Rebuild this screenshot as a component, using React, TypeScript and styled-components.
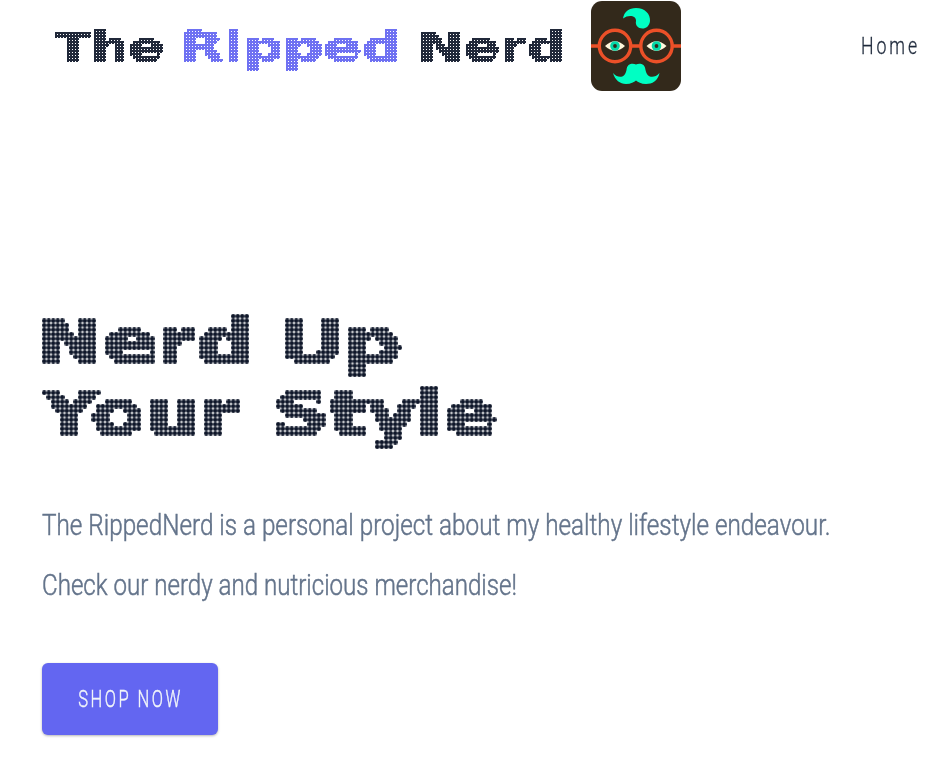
import React from "react";
import styled, { createGlobalStyle } from "styled-components";

const GlobalStyle = createGlobalStyle`
  *, *::before, *::after { box-sizing: border-box; }
  body { margin: 0; background: #fff; font-family: Roboto, "Liberation Sans", sans-serif; overflow: hidden; }
  h1, p { margin: 0; }
`;

const Page = styled.div`
  height: 767px;
  overflow: hidden;
  background: #fff;
`;

const Header = styled.header`
  display: flex;
  align-items: center;
  height: 92px;
  padding: 0 28px 0 55px;
`;

const Brand = styled.div`
  display: flex;
  width: 512px;
  height: 60px;
  margin: 2px 24px 0 0;
  font: 700 40px/61px "DejaVu Sans", sans-serif;
  color: #0f172a;
  -webkit-text-stroke: 1.1px currentColor;
  filter: url(#dots-small);
  mask-image: linear-gradient(90deg, #000 2px, transparent 2px), linear-gradient(#000 2px, transparent 2px);
  mask-size: 3px 3px;
  opacity: 0.92;
`;

const Word = styled.span<{ $width: number; $scale: number; $accent?: boolean }>`
  flex: none;
  width: ${(p) => p.$width}px;
  white-space: nowrap;
  transform: scaleX(${(p) => p.$scale});
  transform-origin: 0 50%;
  color: ${(p) => (p.$accent ? "#6366f1" : "#0f172a")};
`;

const Logo = styled.svg`
  flex: none;
  width: 90px;
  height: 90px;
  border-radius: 11px;
`;

const Nav = styled.nav`
  margin-left: auto;
`;

const NavLink = styled.a`
  display: block;
  width: 59px;
  font-size: 23px;
  font-weight: 300;
  letter-spacing: 3.8px;
  color: #1e293b;
  -webkit-text-stroke: 0.3px currentColor;
  white-space: nowrap;
  transform: scaleX(0.77);
  transform-origin: 0 50%;
`;

const Hero = styled.main`
  padding: 213px 42px 0;
`;

const Title = styled.h1`
  width: 468px;
  height: 153px;
  padding-top: 1px;
  font: 700 60px/72px "DejaVu Sans", sans-serif;
  color: #0f172a;
  -webkit-text-stroke: 2.4px currentColor;
  filter: url(#dots-large);
  mask-image: radial-gradient(circle at 50% 50%, #000 1.7px, transparent 2.8px);
  mask-size: 4.5px 4.5px;
`;

const TitleLine = styled.span<{ $indent: number }>`
  display: flex;
  height: 72px;
  margin-left: ${(p) => p.$indent}px;
`;

const Lead = styled.p`
  margin-top: 37px;
  font-size: 29px;
  font-weight: 300;
  line-height: 60px;
  color: #64748b;
  -webkit-text-stroke: 0.5px currentColor;
`;

const LeadLine = styled.span<{ $scale: number }>`
  display: block;
  width: max-content;
  transform: scaleX(${(p) => p.$scale});
  transform-origin: 0 50%;
`;

const ShopButton = styled.button`
  display: flex;
  align-items: center;
  justify-content: center;
  width: 176px;
  height: 72px;
  margin-top: 48px;
  padding: 2px 0 0;
  border: 0;
  border-radius: 6px;
  background: #6366f1;
  box-shadow: 0 1px 3px rgba(0, 0, 0, 0.2), 0 1px 2px rgba(0, 0, 0, 0.1);
  color: #f1f5f9;
  font: 300 23px/32px Roboto, sans-serif;
  letter-spacing: 3.4px;
  -webkit-text-stroke: 0.4px currentColor;
`;

const ButtonLabel = styled.span`
  white-space: nowrap;
  transform: scaleX(0.72);
`;

const FilterDefs = styled.svg`
  display: block;
  width: 0;
  height: 0;
`;

function DotFilter({ id, tile, points, radius }: { id: string; tile: number; points: number[]; radius: number }) {
  const cells = points.flatMap((y) => points.map((x) => ({ x, y, key: `p${x}-${y}` })));
  return (
    <filter id={id} x="0" y="0" width="1" height="1" colorInterpolationFilters="sRGB">
      {cells.map((c) => (
        <feFlood key={c.key} x={c.x} y={c.y} width="1" height="1" floodColor="#000" result={c.key} />
      ))}
      <feMerge x="0" y="0" width={tile} height={tile} result="cell">
        {cells.map((c) => (
          <feMergeNode key={c.key} in={c.key} />
        ))}
      </feMerge>
      <feTile in="cell" result="grid" />
      <feComponentTransfer in="SourceGraphic" result="solid">
        <feFuncA type="discrete" tableValues="0 1" />
      </feComponentTransfer>
      <feComposite in="solid" in2="grid" operator="in" />
      <feMorphology operator="dilate" radius={radius} />
    </filter>
  );
}

function Eye({ cx }: { cx: number }) {
  return (
    <g>
      <circle cx={cx} cy="45" r="15.7" fill="none" stroke="#ec5028" strokeWidth="3.4" />
      <path d={`M${cx - 10} 45Q${cx} 35.5 ${cx + 10} 45Q${cx} 54.5 ${cx - 10} 45Z`} fill="#fff8dc" />
      <circle cx={cx} cy="45" r="4.8" fill="#05d8a8" />
      <circle cx={cx} cy="45" r="1.9" fill="#33291b" />
    </g>
  );
}

export default function App() {
  return (
    <Page>
      <GlobalStyle />
      <Header>
        <Brand>
          <Word $width={126} $scale={1.32}>The</Word>
          <Word $width={237} $scale={1.4} $accent>Ripped</Word>
          <Word $width={147} $scale={1.35}>Nerd</Word>
        </Brand>
        <Logo viewBox="0 0 90 90" aria-label="The Ripped Nerd">
          <rect width="90" height="90" fill="#33291b" />
          <path d="M32 17.500C33 11 38 7 45 7C54 7 59.500 13 59 20C58.500 25 55 27.500 51.500 27.500C47 27.500 44 24 45 20C45.500 15 38 13 32 17.500Z" fill="#00ffc3" />
          <path d="M0 45H8M39.500 45H49.500M81 45H90" stroke="#ec5028" strokeWidth="3.6" />
          <Eye cx={24} />
          <Eye cx={65.5} />
          <path d="M45 63.500C48 62 54 62 54.500 69C56 77 63 78 68.500 72C67 80 61 83 55 83C50 83 47 81 45 79.500C43 81 40 83 35 83C29 83 24 79 22 72C27.500 78 34 77 35.500 69C36 62 42 62 45 63.500Z" fill="#00ffc3" />
        </Logo>
        <Nav>
          <NavLink>Home</NavLink>
        </Nav>
      </Header>
      <Hero>
        <Title>
          <TitleLine $indent={-5}>
            <Word $width={241} $scale={1.32}>Nerd</Word>
            <Word $width={120} $scale={1.35}>Up</Word>
          </TitleLine>
          <TitleLine $indent={0}>
            <Word $width={231} $scale={1.3}>Your</Word>
            <Word $width={230} $scale={1.3}>Style</Word>
          </TitleLine>
        </Title>
        <Lead>
          <LeadLine $scale={0.837}>The RippedNerd is a personal project about my healthy lifestyle endeavour.</LeadLine>
          <LeadLine $scale={0.831}>Check our nerdy and nutricious merchandise!</LeadLine>
        </Lead>
        <ShopButton>
          <ButtonLabel>SHOP NOW</ButtonLabel>
        </ShopButton>
      </Hero>
      <FilterDefs aria-hidden="true">
        <DotFilter id="dots-small" tile={3} points={[1]} radius={1} />
        <DotFilter id="dots-large" tile={9} points={[2, 6]} radius={2} />
      </FilterDefs>
    </Page>
  );
}
